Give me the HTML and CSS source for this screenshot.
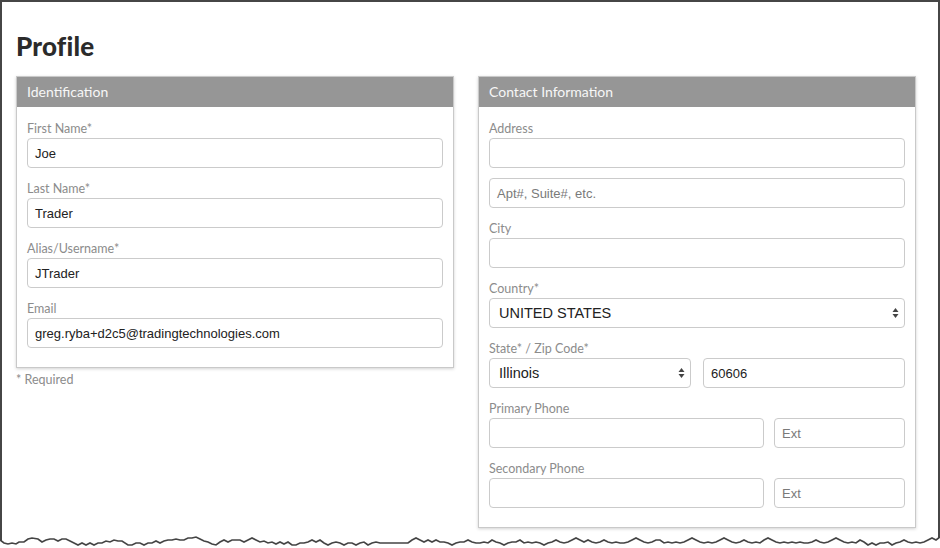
FILE: index.html
```html
<!DOCTYPE html>
<html>
<head>
<meta charset="utf-8">
<link rel="stylesheet" href="styles.css">
</head>
<body>
<div class="frame">
  <div class="page">
    <h1 class="title">Profile</h1>
    <div class="columns">
      <div class="col">
        <section class="card">
          <div class="card-head">Identification</div>
          <div class="card-body">
            <div class="field">
              <div class="label">First Name*</div>
              <div class="input">Joe</div>
            </div>
            <div class="field">
              <div class="label">Last Name*</div>
              <div class="input">Trader</div>
            </div>
            <div class="field">
              <div class="label">Alias/Username*</div>
              <div class="input">JTrader</div>
            </div>
            <div class="field">
              <div class="label">Email</div>
              <div class="input">greg.ryba+d2c5@tradingtechnologies.com</div>
            </div>
          </div>
        </section>
        <div class="note">* Required</div>
      </div>
      <div class="col">
        <section class="card">
          <div class="card-head">Contact Information</div>
          <div class="card-body">
            <div class="field">
              <div class="label">Address</div>
              <div class="input"></div>
              <div class="input placeholder stacked">Apt#, Suite#, etc.</div>
            </div>
            <div class="field">
              <div class="label">City</div>
              <div class="input"></div>
            </div>
            <div class="field">
              <div class="label">Country*</div>
              <div class="input select big">
                <span>UNITED STATES</span>
                <svg class="arrows" width="7" height="12" viewBox="0 0 7 12"><path d="M3.5 1 L6.5 5 H0.5 Z M3.5 11 L6.5 7 H0.5 Z" fill="#444"/></svg>
              </div>
            </div>
            <div class="field">
              <div class="label">State* / Zip Code*</div>
              <div class="pair half">
                <div class="input select big">
                  <span>Illinois</span>
                  <svg class="arrows" width="7" height="12" viewBox="0 0 7 12"><path d="M3.5 1 L6.5 5 H0.5 Z M3.5 11 L6.5 7 H0.5 Z" fill="#444"/></svg>
                </div>
                <div class="input">60606</div>
              </div>
            </div>
            <div class="field">
              <div class="label">Primary Phone</div>
              <div class="pair phone">
                <div class="input"></div>
                <div class="input placeholder">Ext</div>
              </div>
            </div>
            <div class="field">
              <div class="label">Secondary Phone</div>
              <div class="pair phone">
                <div class="input"></div>
                <div class="input placeholder">Ext</div>
              </div>
            </div>
          </div>
        </section>
      </div>
    </div>
  </div>
  <svg class="tear" width="940" height="22" viewBox="0 0 940 22">
    <polygon fill="#ffffff" points="0,9 4,12 8,13 12,12 16,13 19,11 24,11 28,8 32,7 38,8 42,11 46,9 50,8 54,8 58,10 62,8 66,8 70,10 74,12 78,14 82,12 86,14 90,12 94,14 98,12 102,12 106,10 110,11 114,9 118,10 122,10 128,14 132,14 136,12 140,12 144,14 148,12 152,12 156,10 160,12 164,10 168,9 172,9 176,8 180,9 184,9 188,7 192,7 196,6 200,8 204,10 208,11 212,13 216,14 220,11 224,9 228,11 232,9 236,9 240,9 244,11 248,9 252,7 256,9 260,11 264,10 268,12 272,11 276,13 280,11 284,13 288,11 292,14 296,14 300,12 304,12 308,11 312,9 316,11 320,9 324,12 328,14 332,12 336,11 340,12 344,14 348,12 352,12 356,14 360,12 364,11 368,14 372,12 376,11 380,12 384,12 388,12 392,12 396,12 400,12 404,12 408,12 412,9 416,7 420,9 424,11 428,9 432,11 436,9 440,11 444,11 448,12 452,14 456,12 460,11 464,11 468,9 472,11 476,12 480,12 484,11 488,12 492,9 496,11 500,12 504,14 508,12 512,11 516,11 520,9 524,12 528,11 532,12 536,11 540,12 544,14 548,12 552,11 556,9 560,11 564,12 568,11 572,9 576,7 580,9 584,11 588,9 592,11 596,12 600,11 604,9 608,11 612,12 616,11 620,12 624,12 628,11 632,9 636,7 640,9 644,11 648,12 652,11 656,9 660,9 664,12 668,11 672,12 676,11 680,12 684,11 688,9 692,7 696,9 700,11 704,12 708,11 712,12 716,11 720,9 724,7 728,9 732,11 736,12 740,11 744,9 748,11 752,12 756,11 760,12 764,9 768,7 772,9 776,11 780,12 784,11 788,12 792,11 796,12 800,11 804,12 808,12 812,11 816,9 820,11 824,12 828,11 832,9 836,7 840,9 844,11 848,12 852,11 856,12 860,9 864,11 868,14 872,12 876,14 880,12 884,12 888,11 892,14 896,12 900,11 904,9 908,11 912,12 916,11 920,12 924,11 928,9 932,7 936,9 940,6 940,22 0,22"/>
    <polyline fill="none" stroke="#444" stroke-width="1.6" points="0,9 4,12 8,13 12,12 16,13 19,11 24,11 28,8 32,7 38,8 42,11 46,9 50,8 54,8 58,10 62,8 66,8 70,10 74,12 78,14 82,12 86,14 90,12 94,14 98,12 102,12 106,10 110,11 114,9 118,10 122,10 128,14 132,14 136,12 140,12 144,14 148,12 152,12 156,10 160,12 164,10 168,9 172,9 176,8 180,9 184,9 188,7 192,7 196,6 200,8 204,10 208,11 212,13 216,14 220,11 224,9 228,11 232,9 236,9 240,9 244,11 248,9 252,7 256,9 260,11 264,10 268,12 272,11 276,13 280,11 284,13 288,11 292,14 296,14 300,12 304,12 308,11 312,9 316,11 320,9 324,12 328,14 332,12 336,11 340,12 344,14 348,12 352,12 356,14 360,12 364,11 368,14 372,12 376,11 380,12 384,12 388,12 392,12 396,12 400,12 404,12 408,12 412,9 416,7 420,9 424,11 428,9 432,11 436,9 440,11 444,11 448,12 452,14 456,12 460,11 464,11 468,9 472,11 476,12 480,12 484,11 488,12 492,9 496,11 500,12 504,14 508,12 512,11 516,11 520,9 524,12 528,11 532,12 536,11 540,12 544,14 548,12 552,11 556,9 560,11 564,12 568,11 572,9 576,7 580,9 584,11 588,9 592,11 596,12 600,11 604,9 608,11 612,12 616,11 620,12 624,12 628,11 632,9 636,7 640,9 644,11 648,12 652,11 656,9 660,9 664,12 668,11 672,12 676,11 680,12 684,11 688,9 692,7 696,9 700,11 704,12 708,11 712,12 716,11 720,9 724,7 728,9 732,11 736,12 740,11 744,9 748,11 752,12 756,11 760,12 764,9 768,7 772,9 776,11 780,12 784,11 788,12 792,11 796,12 800,11 804,12 808,12 812,11 816,9 820,11 824,12 828,11 832,9 836,7 840,9 844,11 848,12 852,11 856,12 860,9 864,11 868,14 872,12 876,14 880,12 884,12 888,11 892,14 896,12 900,11 904,9 908,11 912,12 916,11 920,12 924,11 928,9 932,7 936,9 940,6"/>
  </svg>
</div>
</body>
</html>
```

FILE: styles.css
```css
html, body {
  margin: 0;
  padding: 0;
  background: #ffffff;
}

.frame {
  position: relative;
  width: 940px;
  height: 548px;
  overflow: hidden;
  background: #ffffff;
}

.page {
  box-sizing: border-box;
  width: 940px;
  height: 544px;
  border: 2px solid #464646;
  border-bottom: none;
  padding: 0 0 0 14px;
  font-family: Lato, "Open Sans", sans-serif;
}

.title {
  margin: 0;
  padding-top: 29px;
  height: 45px;
  box-sizing: content-box;
  font-size: 26px;
  line-height: 30px;
  font-weight: 900;
  color: #2b2b2b;
  letter-spacing: 0.2px;
}

.columns {
  display: grid;
  grid-template-columns: 438px 438px;
  column-gap: 24px;
  align-items: start;
}

.card {
  border: 1px solid #c9c9c9;
  box-shadow: 0 1px 3px rgba(0, 0, 0, 0.18);
  background: #ffffff;
}

.card-head {
  height: 30px;
  line-height: 30px;
  background: #969696;
  color: #f7f7f7;
  font-size: 14px;
  padding-left: 10px;
}

.card-body {
  padding: 12px 10px 19px 10px;
}

.field + .field {
  margin-top: 11px;
}

.label {
  height: 19px;
  line-height: 20px;
  font-size: 12.5px;
  color: #8c8c8c;
}

.input {
  box-sizing: border-box;
  height: 30px;
  border: 1px solid #cbcbcb;
  border-radius: 4px;
  padding: 0 7px;
  display: flex;
  align-items: center;
  font-family: "Liberation Sans", Arial, sans-serif;
  font-size: 13px;
  color: #222222;
  background: #ffffff;
}

.input.stacked {
  margin-top: 10px;
}

.placeholder {
  color: #7a7a7a;
}

.select {
  justify-content: space-between;
  padding: 0 5px 0 9px;
}

.big {
  font-size: 14.5px;
}

.arrows {
  display: block;
}

.pair {
  display: grid;
}

.pair.half {
  grid-template-columns: 202px 1fr;
  column-gap: 12px;
}

.pair.phone {
  grid-template-columns: 275px 1fr;
  column-gap: 10px;
}

.note {
  margin-top: 4px;
  font-size: 12.5px;
  color: #8c8c8c;
}

.tear {
  position: absolute;
  left: 0;
  top: 531px;
  display: block;
}
```
